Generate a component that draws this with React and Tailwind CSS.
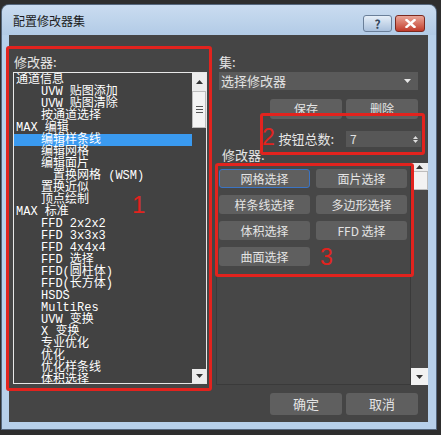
import React from 'react';

const listItems = [
    { text: '通道信息', indent: 0 },
    { text: 'UVW 贴图添加', indent: 1 },
    { text: 'UVW 贴图清除', indent: 1 },
    { text: '按通道选择', indent: 1 },
    { text: 'MAX 编辑', indent: 0 },
    { text: '编辑样条线', indent: 1, selected: true },
    { text: '编辑网格', indent: 1 },
    { text: '编辑面片', indent: 1 },
    { text: '置换网格 (WSM)', indent: 2 },
    { text: '置换近似', indent: 1 },
    { text: '顶点绘制', indent: 1 },
    { text: 'MAX 标准', indent: 0 },
    { text: 'FFD 2x2x2', indent: 1 },
    { text: 'FFD 3x3x3', indent: 1 },
    { text: 'FFD 4x4x4', indent: 1 },
    { text: 'FFD 选择', indent: 1 },
    { text: 'FFD(圆柱体)', indent: 1 },
    { text: 'FFD(长方体)', indent: 1 },
    { text: 'HSDS', indent: 1 },
    { text: 'MultiRes', indent: 1 },
    { text: 'UVW 变换', indent: 1 },
    { text: 'X 变换', indent: 1 },
    { text: '专业优化', indent: 1 },
    { text: '优化', indent: 1 },
    { text: '优化样条线', indent: 1 },
    { text: '体积选择', indent: 1 },
];

const modButtons = ['网格选择', '面片选择', '样条线选择', '多边形选择', '体积选择', 'FFD 选择', '曲面选择'];

const indentClass = ['pl-[2px]', 'pl-[27px]', 'pl-[39px]'];

const UpArrow = () => (
    <svg width="7" height="4" viewBox="0 0 7 4"><path d="M0 4 L3.5 0 L7 4 Z" fill="#333" /></svg>
);
const DownArrow = ({ color = '#333' }) => (
    <svg width="7" height="4" viewBox="0 0 7 4"><path d="M0 0 L3.5 4 L7 0 Z" fill={color} /></svg>
);

const GrayButton = ({ children, className = '' }) => (
    <div className={`flex items-center justify-center rounded-[3px] bg-[#5f5f5f] text-[12px] text-[#e4e4e4] ${className}`}>
        {children}
    </div>
);

export default function App() {
    return (
        <div className="relative w-[441px] h-[435px] overflow-hidden bg-[#2e2e2e] font-['Noto_Sans_CJK_SC',sans-serif]">
            {/* dialog window */}
            <div className="ml-[2px] mt-[5px] w-[434px] h-[424px] rounded-t-[7px] bg-[#b7d0ea] flex flex-col shadow-[0_0_0_1px_#55677d]">
                <div className="h-[30px] flex items-start rounded-t-[7px] bg-linear-to-b from-[#cadcf0] to-[#b2cbe6]">
                    <span className="ml-[11px] mt-[9px] text-[12px] leading-[14px] text-[#1c1c1c]">配置修改器集</span>
                    <div className="ml-auto mr-[11px] mt-[10px] flex gap-[3px]">
                        <div className="w-[29px] h-[17px] rounded-[3px] border border-[#6a7f99] bg-linear-to-b from-[#e6eff8] to-[#a9c0dc] flex items-center justify-center text-[12px] font-bold leading-none text-[#34465c]">?</div>
                        <div className="w-[30px] h-[17px] rounded-[3px] border border-[#7b2a20] bg-linear-to-b from-[#e9a598] to-[#c0392a] flex items-center justify-center">
                            <svg width="11" height="9" viewBox="0 0 11 9"><path d="M1.5 1 L9.5 8 M9.5 1 L1.5 8" stroke="#fff" strokeWidth="2.4" strokeLinecap="square" /></svg>
                        </div>
                    </div>
                </div>

                <div className="ml-[7px] w-[419px] h-[387px] bg-[#454545] flex pl-[4px] pt-[17px] text-[#e6e6e6]">
                    {/* left column */}
                    <div className="w-[194px] flex flex-col">
                        <div className="h-[20px] text-[13px] leading-[20px] pl-[1px]">修改器:</div>
                        <div className="h-[312px] border border-[#e8e8e8] bg-[#424242] flex overflow-hidden">
                            <div className="flex-1 pt-[1px] font-['Liberation_Mono','Noto_Sans_CJK_SC',monospace] text-[12px] leading-[12px] text-white">
                                {listItems.map((item, i) => (
                                    <div key={i} className={`h-[12px] whitespace-nowrap ${indentClass[item.indent]} ${item.selected ? 'bg-[#3a9af0]' : ''}`}>
                                        {item.text}
                                    </div>
                                ))}
                            </div>
                            <div className="w-[14px] flex flex-col">
                                <div className="h-[18px] bg-[#ececec] flex items-center justify-center"><UpArrow /></div>
                                <div className="h-[37px] bg-[#f4f4f4] border border-[#bdbdbd] flex flex-col items-center justify-center gap-[2px]">
                                    <div className="w-[7px] h-[1px] bg-[#555]" />
                                    <div className="w-[7px] h-[1px] bg-[#555]" />
                                    <div className="w-[7px] h-[1px] bg-[#555]" />
                                </div>
                                <div className="flex-1" />
                                <div className="h-[14px] bg-[#ececec] flex items-center justify-center"><DownArrow /></div>
                            </div>
                        </div>
                    </div>

                    {/* right column */}
                    <div className="ml-[9px] w-[212px] flex flex-col">
                        <div className="h-[20px] pl-[3px] text-[13px] leading-[20px]">集:</div>
                        <div className="ml-[3px] w-[199px] h-[18px] bg-[#5a5a5a] flex items-center pl-[2px] pr-[7px] text-[13px] text-[#e2e2e2]">
                            <span>选择修改器</span>
                            <span className="ml-auto"><DownArrow color="#e8e8e8" /></span>
                        </div>
                        <div className="mt-[9px] h-[20px] flex justify-end gap-[4px] pr-[10px]">
                            <GrayButton className="w-[72px]">保存</GrayButton>
                            <GrayButton className="w-[72px]">删除</GrayButton>
                        </div>
                        <div className="mt-[12px] h-[16px] flex items-center justify-end pr-[7px]">
                            <span className="text-[13px] mr-[12px]">按钮总数:</span>
                            <div className="w-[75px] h-[16px] bg-[#575757] flex items-center pl-[4px] pr-[3px] text-[12px] text-[#e2e2e2]">
                                <span>7</span>
                                <span className="ml-auto flex flex-col gap-[1px]">
                                    <svg width="5" height="3" viewBox="0 0 5 3"><path d="M0 3 L2.5 0 L5 3 Z" fill="#ddd" /></svg>
                                    <svg width="5" height="3" viewBox="0 0 5 3"><path d="M0 0 L2.5 3 L5 0 Z" fill="#ddd" /></svg>
                                </span>
                            </div>
                        </div>
                        <div className="h-[16px] pl-[6px] text-[13px] leading-[16px]">修改器:</div>
                        <div className="h-[222px] flex">
                            <div className="flex-1 border border-[#3a3a3a] bg-[#474747] pl-[2px] pt-[5px]">
                                <div className="grid grid-cols-[91px_91px] gap-x-[6px] gap-y-[7px]">
                                    {modButtons.map((label, i) => (
                                        <GrayButton key={label} className={`h-[19px] ${i === 0 ? 'border border-[#3b74c4]' : ''}`}>{label}</GrayButton>
                                    ))}
                                </div>
                            </div>
                            <div className="w-[17px] flex flex-col bg-[#4a4a4a]">
                                <div className="h-[8px] bg-[#ececec] flex items-center justify-center"><UpArrow /></div>
                                <div className="h-[19px] bg-[#f2f2f2] border border-[#bdbdbd]" />
                                <div className="flex-1" />
                                <div className="h-[17px] bg-[#f2f2f2] flex items-center justify-center"><DownArrow /></div>
                            </div>
                        </div>
                        <div className="mt-[8px] h-[22px] flex justify-end gap-[4px] pr-[10px]">
                            <GrayButton className="w-[72px] text-[13px]">确定</GrayButton>
                            <GrayButton className="w-[72px] text-[13px]">取消</GrayButton>
                        </div>
                    </div>
                </div>
            </div>

            {/* red annotation boxes */}
            <div className="absolute left-[6px] top-[46px] w-[206px] h-[345px] border-[3px] border-[#e2231e] rounded-[3px]" />
            <div className="absolute left-[260px] top-[113px] w-[165px] h-[42px] border-[3px] border-[#e2231e] rounded-[3px]" />
            <div className="absolute left-[215px] top-[163px] w-[199px] h-[114px] border-[3px] border-[#e2231e] rounded-[3px]" />
            <span className="absolute left-[132px] top-[192px] text-[24px] leading-[26px] text-[#e2231e] font-['Liberation_Sans',sans-serif]">1</span>
            <span className="absolute left-[262px] top-[125px] text-[23px] leading-[24px] text-[#e2231e] font-['Liberation_Sans',sans-serif]">2</span>
            <span className="absolute left-[320px] top-[245px] text-[23px] leading-[24px] text-[#e2231e] font-['Liberation_Sans',sans-serif]">3</span>
        </div>
    );
}
